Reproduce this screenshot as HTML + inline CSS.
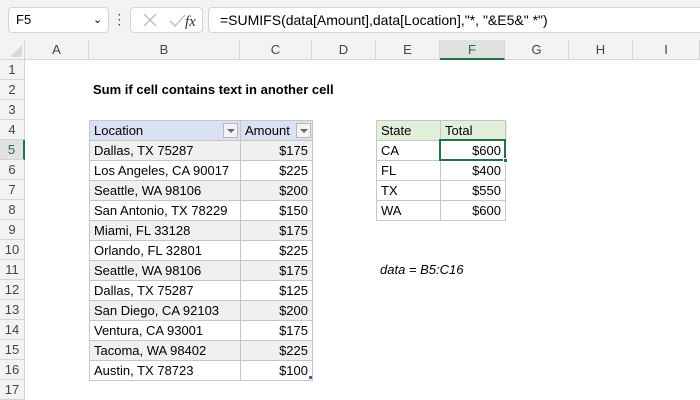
<!DOCTYPE html>
<html><head><style>
*{margin:0;padding:0;box-sizing:border-box}
body{width:700px;height:400px;overflow:hidden;background:#fff;font-family:"Liberation Sans",Calibri,sans-serif;font-size:13px;color:#000;position:relative}
.a{position:absolute}
.top{left:0;top:0;width:700px;height:40px;background:#f3f3f3}
.box{background:#fff;border:1px solid #d4d4d4;border-radius:4px}
.ch{top:40px;height:20px;background:#f3f3f3;border-right:1px solid #d4d4d4;border-bottom:1px solid #d4d4d4;text-align:center;line-height:20px;color:#444;font-size:13px}
.rh{left:0;width:25px;height:20px;background:#f3f3f3;border-bottom:1px solid #d4d4d4;border-right:1px solid #d4d4d4;text-align:center;line-height:20px;color:#444;font-size:13px}
.c{height:21px;line-height:20px;border:1px solid #c6c6c6;margin:-1px 0 0 -1px;padding:0 4px;white-space:nowrap;overflow:hidden}
.r{text-align:right}
.g{background:#f0f0f0}
.dd{width:15px;height:15px;background:#f3f3f3;border:1px solid #b8b8b8}
.dd:after{content:"";position:absolute;left:3px;top:5px;border-left:4px solid transparent;border-right:4px solid transparent;border-top:4px solid #666}
</style></head><body>
<div class="a top"></div>
<div class="a box" style="left:8px;top:7px;width:101px;height:26px;line-height:24px;padding-left:7px;font-size:13px">F5<span class="a" style="left:84px;top:0;font-size:11px">&#8964;</span></div>
<div class="a" style="left:118px;top:13px;width:3px;height:14px;line-height:5px;font-size:10px;font-weight:bold;color:#444">·<br>·<br>·</div>
<div class="a box" style="left:130px;top:7px;width:73px;height:26px"></div>
<svg class="a" style="left:130px;top:7px" width="73" height="26"><path d="M14 7l12 12M26 7L14 19" stroke="#bbb" stroke-width="1.3" fill="none"/><path d="M40 14l5 5 10-11" stroke="#bbb" stroke-width="1.3" fill="none"/><text x="55" y="19" font-family="Liberation Serif,serif" font-style="italic" font-size="15" fill="#333">fx</text></svg>
<div class="a box" style="left:208px;top:7px;width:500px;height:26px;line-height:24px;padding-left:11px;font-size:14px">=SUMIFS(data[Amount],data[Location],"*, "&amp;E5&amp;" *")</div>
<div class="a" style="left:0;top:40px;width:25px;height:20px;background:#f3f3f3;border-right:1px solid #d4d4d4;border-bottom:1px solid #d4d4d4"></div>
<svg class="a" style="left:8px;top:44px" width="16" height="14"><path d="M14 1V13H2Z" fill="#d8d8d8"/></svg>
<div class="a ch" style="left:25px;width:64px">A</div>
<div class="a ch" style="left:89px;width:151px">B</div>
<div class="a ch" style="left:240px;width:72px">C</div>
<div class="a ch" style="left:312px;width:64px">D</div>
<div class="a ch" style="left:376px;width:64px">E</div>
<div class="a ch" style="left:440px;width:65px;background:#e1e1e1;border-bottom:2px solid #217346;color:#217346">F</div>
<div class="a ch" style="left:505px;width:64px">G</div>
<div class="a ch" style="left:569px;width:64px">H</div>
<div class="a ch" style="left:633px;width:67px">I</div>
<div class="a rh" style="top:60px">1</div><div class="a rh" style="top:80px">2</div><div class="a rh" style="top:100px">3</div><div class="a rh" style="top:120px">4</div>
<div class="a rh" style="top:140px;background:#e1e1e1;border-right:2px solid #217346;color:#217346">5</div>
<div class="a rh" style="top:160px">6</div><div class="a rh" style="top:180px">7</div><div class="a rh" style="top:200px">8</div><div class="a rh" style="top:220px">9</div><div class="a rh" style="top:240px">10</div><div class="a rh" style="top:260px">11</div><div class="a rh" style="top:280px">12</div><div class="a rh" style="top:300px">13</div><div class="a rh" style="top:320px">14</div><div class="a rh" style="top:340px">15</div><div class="a rh" style="top:360px">16</div><div class="a rh" style="top:380px">17</div>
<div class="a" style="left:93px;top:80px;line-height:20px;font-weight:bold;font-size:13px">Sum if cell contains text in another cell</div>
<div class="a" style="left:90px;top:121px;width:223px">
<div style="display:flex;background:#d9e1f2"><div class="c" style="width:152px;position:relative">Location<div class="a dd" style="left:133px;top:2px"></div></div><div class="c" style="width:73px;position:relative">Amount<div class="a dd" style="left:55px;top:2px"></div></div></div>
<div style="display:flex"><div class="c g" style="width:152px">Dallas, TX 75287</div><div class="c g r" style="width:73px">$175</div></div>
<div style="display:flex"><div class="c" style="width:152px">Los Angeles, CA 90017</div><div class="c r" style="width:73px">$225</div></div>
<div style="display:flex"><div class="c g" style="width:152px">Seattle, WA 98106</div><div class="c g r" style="width:73px">$200</div></div>
<div style="display:flex"><div class="c" style="width:152px">San Antonio, TX 78229</div><div class="c r" style="width:73px">$150</div></div>
<div style="display:flex"><div class="c g" style="width:152px">Miami, FL 33128</div><div class="c g r" style="width:73px">$175</div></div>
<div style="display:flex"><div class="c" style="width:152px">Orlando, FL 32801</div><div class="c r" style="width:73px">$225</div></div>
<div style="display:flex"><div class="c g" style="width:152px">Seattle, WA 98106</div><div class="c g r" style="width:73px">$175</div></div>
<div style="display:flex"><div class="c" style="width:152px">Dallas, TX 75287</div><div class="c r" style="width:73px">$125</div></div>
<div style="display:flex"><div class="c g" style="width:152px">San Diego, CA 92103</div><div class="c g r" style="width:73px">$200</div></div>
<div style="display:flex"><div class="c" style="width:152px">Ventura, CA 93001</div><div class="c r" style="width:73px">$175</div></div>
<div style="display:flex"><div class="c g" style="width:152px">Tacoma, WA 98402</div><div class="c g r" style="width:73px">$225</div></div>
<div style="display:flex"><div class="c" style="width:152px">Austin, TX 78723</div><div class="c r" style="width:73px">$100</div></div>
</div>
<div class="a" style="left:309px;top:376px;width:3px;height:3px;background:#3d5fb0"></div>
<div class="a" style="left:377px;top:121px;width:130px">
<div style="display:flex;background:#e2efda"><div class="c" style="width:65px">State</div><div class="c" style="width:66px">Total</div></div>
<div style="display:flex"><div class="c" style="width:65px">CA</div><div class="c r" style="width:66px">$600</div></div>
<div style="display:flex"><div class="c" style="width:65px">FL</div><div class="c r" style="width:66px">$400</div></div>
<div style="display:flex"><div class="c" style="width:65px">TX</div><div class="c r" style="width:66px">$550</div></div>
<div style="display:flex"><div class="c" style="width:65px">WA</div><div class="c r" style="width:66px">$600</div></div>
</div>
<div class="a" style="left:439px;top:139px;width:67px;height:22px;border:2px solid #217346"></div>
<div class="a" style="left:503px;top:158px;width:5px;height:5px;background:#217346;border:1px solid #fff"></div>
<div class="a" style="left:380px;top:260px;line-height:20px;font-style:italic">data = B5:C16</div>
</body></html>
